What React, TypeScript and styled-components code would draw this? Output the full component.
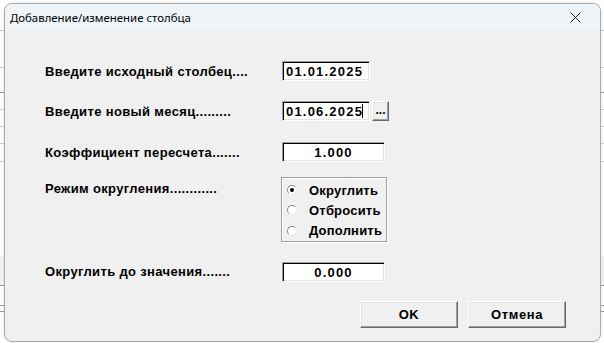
import React, { FC } from "react";
import styled, { createGlobalStyle } from "styled-components";

const GlobalStyle = createGlobalStyle`
  html, body {
    margin: 0;
    padding: 0;
    background: #ffffff;
  }
`;

// horizontal grid lines of the sheet visible behind the dialog
const sheetRows: { h: number; line: string; fill?: string }[] = [
  { h: 31, line: "#c8c8c8" },
  { h: 37, line: "#d0d0d0" },
  { h: 25, line: "#9a9a9a" },
  { h: 17, line: "#d0d0d0" },
  { h: 17, line: "#d0d0d0" },
  { h: 17, line: "#d0d0d0" },
  { h: 18, line: "#d0d0d0" },
  { h: 94, line: "transparent" },
  { h: 30, line: "#9a9a9a", fill: "#f2f2f2" },
  { h: 20, line: "#9a9a9a" },
  { h: 6, line: "#9a9a9a" },
  { h: 31, line: "transparent" },
];

const radios = ["Округлить", "Отбросить", "Дополнить"];

const App: FC = () => {
  return (
    <>
      <GlobalStyle />
      <Screen>
        <Sheet>
          {sheetRows.map((r, i) => (
            <SheetRow key={i} $h={r.h} $line={r.line} $fill={r.fill} />
          ))}
        </Sheet>
        <Dialog>
          <TitleBar>
            <Title>Добавление/изменение столбца</Title>
            <CloseButton>
              <svg width="11" height="11" viewBox="0 0 11 11">
                <path d="M0.5 0.5 L10.5 10.5 M10.5 0.5 L0.5 10.5" stroke="#1a1a1a" strokeWidth="1" />
              </svg>
            </CloseButton>
          </TitleBar>
          <Body>
            <Form>
              <Label>Введите исходный столбец....</Label>
              <Control>
                <Field $width={88}>01.01.2025</Field>
              </Control>

              <Label>Введите новый месяц.........</Label>
              <Control>
                <Field $width={88}>
                  01.06.2025
                  <Caret />
                </Field>
                <DotsButton>...</DotsButton>
              </Control>

              <Label $shift={1}>Коэффициент пересчета.......</Label>
              <Control $shift={1}>
                <Field $width={103} $center>
                  1.000
                </Field>
              </Control>

              <Label $top $shift={-5}>
                Режим округления............
              </Label>
              <Control $shift={-5}>
                <Group>
                  {radios.map((r, i) => (
                    <RadioRow key={r}>
                      <Radio $checked={i === 0} />
                      <RadioText>{r}</RadioText>
                    </RadioRow>
                  ))}
                </Group>
              </Control>

              <Label $shift={-2}>Округлить до значения.......</Label>
              <Control>
                <Field $width={103} $center>
                  0.000
                </Field>
              </Control>
            </Form>
            <Buttons>
              <Button>OK</Button>
              <Button>Отмена</Button>
            </Buttons>
          </Body>
        </Dialog>
      </Screen>
    </>
  );
};

export default App;

const Screen = styled.div`
  position: relative;
  width: 604px;
  height: 343px;
  overflow: hidden;
  background: #ffffff;
`;

const Sheet = styled.div`
  display: flex;
  flex-direction: column;
`;

const SheetRow = styled.div<{ $h: number; $line: string; $fill?: string }>`
  height: ${(p) => p.$h - 1}px;
  border-bottom: 1px solid ${(p) => p.$line};
  background: ${(p) => p.$fill || "transparent"};
`;

const Dialog = styled.div`
  position: absolute;
  left: 4px;
  top: 3px;
  width: 595px;
  height: 337px;
  display: flex;
  flex-direction: column;
  background: #f0f0f0;
  border: 1px solid #aaaaaa;
  border-radius: 8px;
  overflow: hidden;
  box-shadow: 0 0 3px rgba(0, 0, 0, 0.12);
`;

const TitleBar = styled.div`
  height: 26px;
  display: flex;
  align-items: center;
  justify-content: space-between;
  background: #eff4f9;
  padding: 0 0 0 5px;
`;

const Title = styled.span`
  font-family: "Noto Sans", "Segoe UI", sans-serif;
  font-size: 11.4px;
  color: #000000;
  margin-top: 1px;
`;

const CloseButton = styled.div`
  width: 46px;
  height: 26px;
  display: flex;
  align-items: center;
  justify-content: center;
  margin-right: 2px;
`;

const Body = styled.div`
  flex: 1;
  display: flex;
  flex-direction: column;
  padding: 31px 34px 0 40px;
`;

const Form = styled.div`
  display: grid;
  grid-template-columns: 237px 1fr;
  row-gap: 20px;
`;

const Label = styled.div<{ $top?: boolean; $shift?: number }>`
  display: flex;
  align-items: ${(p) => (p.$top ? "flex-start" : "center")};
  padding-top: ${(p) => (p.$top ? "4px" : "0")};
  margin-top: ${(p) => p.$shift || 0}px;
  font-family: "Liberation Sans", Arial, sans-serif;
  font-weight: bold;
  font-size: 13px;
  letter-spacing: 0.35px;
  color: #000000;
  white-space: nowrap;
`;

const Control = styled.div<{ $shift?: number }>`
  display: flex;
  align-items: center;
  gap: 2px;
  margin-top: ${(p) => p.$shift || 0}px;
`;

const Field = styled.div<{ $width: number; $center?: boolean }>`
  box-sizing: border-box;
  width: ${(p) => p.$width}px;
  height: 20px;
  display: flex;
  align-items: center;
  justify-content: ${(p) => (p.$center ? "center" : "flex-start")};
  padding: 0 3px;
  background: #ffffff;
  border-top: 1px solid #a0a0a0;
  border-left: 1px solid #a0a0a0;
  border-right: 1px solid #ffffff;
  border-bottom: 1px solid #ffffff;
  box-shadow: inset 1px 1px 0 #000000, inset -1px -1px 0 #e3e3e3;
  font-family: "Liberation Sans", Arial, sans-serif;
  font-weight: bold;
  font-size: 13px;
  letter-spacing: 1.2px;
  color: #000000;
`;

const Caret = styled.span`
  display: inline-block;
  width: 1px;
  height: 14px;
  margin-left: -1px;
  background: #000000;
`;

const raised = `
  box-sizing: border-box;
  background: #f0f0f0;
  border-top: 1px solid #ffffff;
  border-left: 1px solid #ffffff;
  border-right: 1px solid #696969;
  border-bottom: 1px solid #696969;
  box-shadow: inset -1px -1px 0 #a0a0a0, inset 1px 1px 0 #e3e3e3;
  font-family: "Liberation Sans", Arial, sans-serif;
  font-weight: bold;
  color: #000000;
  display: flex;
  align-items: center;
  justify-content: center;
`;

const DotsButton = styled.div`
  ${raised}
  width: 17px;
  height: 20px;
  font-size: 12px;
  padding-bottom: 3px;
`;

const Group = styled.div`
  box-sizing: border-box;
  width: 106px;
  height: 65px;
  margin-left: -1px;
  display: flex;
  flex-direction: column;
  padding: 2px 0 0 5px;
  border: 1px solid #a0a0a0;
  box-shadow: inset 1px 1px 0 #ffffff, 1px 1px 0 #ffffff;
`;

const RadioRow = styled.div`
  height: 20.5px;
  display: flex;
  align-items: center;
  gap: 12px;
`;

const Radio = styled.span<{ $checked?: boolean }>`
  box-sizing: border-box;
  position: relative;
  width: 10px;
  height: 10px;
  border-radius: 50%;
  background: #ffffff;
  border: 1px solid;
  border-color: #8a8a8a #e8e8e8 #e8e8e8 #8a8a8a;
  &::after {
    content: "";
    display: ${(p) => (p.$checked ? "block" : "none")};
    position: absolute;
    left: 2px;
    top: 2px;
    width: 4px;
    height: 4px;
    border-radius: 50%;
    background: #000000;
  }
`;

const RadioText = styled.span`
  font-family: "Liberation Sans", Arial, sans-serif;
  font-weight: bold;
  font-size: 13px;
  letter-spacing: 0.2px;
  color: #000000;
`;

const Buttons = styled.div`
  display: flex;
  justify-content: flex-end;
  gap: 10px;
  margin-top: 19px;
`;

const Button = styled.div`
  ${raised}
  width: 98px;
  height: 27px;
  font-size: 13px;
  letter-spacing: 0.6px;
`;
